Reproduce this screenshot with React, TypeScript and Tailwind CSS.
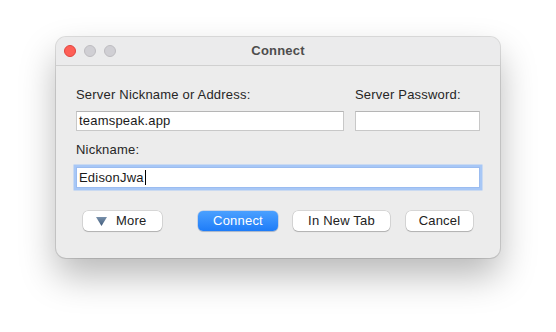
import React from 'react';

const font = { fontFamily: '"Liberation Sans", Arial, sans-serif' };

const Button = ({ children, primary, className }: { children: React.ReactNode; primary?: boolean; className?: string }) => (
  <div
    className={`h-[20px] rounded-[5px] flex items-center justify-center text-[13px] tracking-[0.2px] ${
      primary
        ? 'bg-gradient-to-b from-[#4aa0ff] to-[#1d7cf8] text-white shadow-[0_0_0_0.5px_rgba(0,80,200,0.3),0_1px_1px_rgba(0,0,0,0.15)]'
        : 'bg-white text-[#222] shadow-[0_0_0_0.5px_rgba(0,0,0,0.18),0_1px_1px_rgba(0,0,0,0.18)]'
    } ${className || ''}`}
  >
    {children}
  </div>
);

const App = () => {
  return (
    <div className="w-[556px] h-[332px] bg-white overflow-hidden pt-[37px] pl-[56px]" style={font}>
      {/* Window */}
      <div className="w-[444px] h-[221px] rounded-[10px] bg-[#ececec] flex flex-col overflow-hidden shadow-[0_0_0_1px_rgba(0,0,0,0.12),0_18px_36px_rgba(0,0,0,0.28)]">
        {/* Title bar */}
        <div className="h-[29px] shrink-0 bg-[#ebebec] border-b border-[#d0d0d0] flex items-center relative">
          <div className="flex items-center gap-[8px] pl-[8px]">
            <div className="w-[12px] h-[12px] rounded-full bg-[#fe5f57] border-[0.5px] border-[#e0443e]" />
            <div className="w-[12px] h-[12px] rounded-full bg-[#d0cfd4] border-[0.5px] border-[#bdbcc0]" />
            <div className="w-[12px] h-[12px] rounded-full bg-[#d0cfd4] border-[0.5px] border-[#bdbcc0]" />
          </div>
          <div className="absolute inset-0 flex items-center justify-center text-[13px] font-bold tracking-[0.2px] text-[#4d4d4d]">
            Connect
          </div>
        </div>

        {/* Body */}
        <div className="flex flex-col pt-[21px] px-[20px] tracking-[0.2px]">
          <div className="flex gap-[11px]">
            <div className="w-[268px] flex flex-col">
              <div className="h-[16px] leading-[16px] text-[13px] text-[#262626]">Server Nickname or Address:</div>
              <div className="mt-[8px] h-[20px] bg-white border border-[#c8c8c8] border-t-[#b5b5b5] flex items-center pl-[2px] text-[13px] text-[#1a1a1a]">
                teamspeak.app
              </div>
            </div>
            <div className="w-[125px] flex flex-col">
              <div className="h-[16px] leading-[16px] text-[13px] text-[#262626]">Server Password:</div>
              <div className="mt-[8px] h-[20px] bg-white border border-[#c8c8c8] border-t-[#b5b5b5]" />
            </div>
          </div>

          <div className="mt-[11px] h-[16px] leading-[16px] text-[13px] text-[#262626]">Nickname:</div>
          <div className="mt-[9px] h-[21px] bg-white border border-[#9bbcf0] shadow-[0_0_0_2.5px_#a7c7f6] flex items-center pl-[2px] text-[13px] text-[#1a1a1a]">
            EdisonJwa
            <span className="inline-block w-[1px] h-[15px] bg-black ml-[1px]" />
          </div>

          {/* Buttons */}
          <div className="mt-[23px] flex items-center px-[7px]">
            <Button className="w-[79px] gap-[9px] justify-start pl-[13px]">
              <svg width="11" height="9" viewBox="0 0 11 9">
                <defs>
                  <linearGradient id="tri" x1="0" y1="0" x2="0" y2="1">
                    <stop offset="0" stopColor="#7890ab" />
                    <stop offset="1" stopColor="#3f5a7a" />
                  </linearGradient>
                </defs>
                <polygon points="0,0 11,0 5.5,9" fill="url(#tri)" />
              </svg>
              <span>More</span>
            </Button>
            <Button primary className="w-[80px] ml-[36px]">Connect</Button>
            <Button className="w-[97px] ml-[15px]">In New Tab</Button>
            <Button className="w-[67px] ml-[16px]">Cancel</Button>
          </div>
        </div>
      </div>
    </div>
  );
};

export default App;
